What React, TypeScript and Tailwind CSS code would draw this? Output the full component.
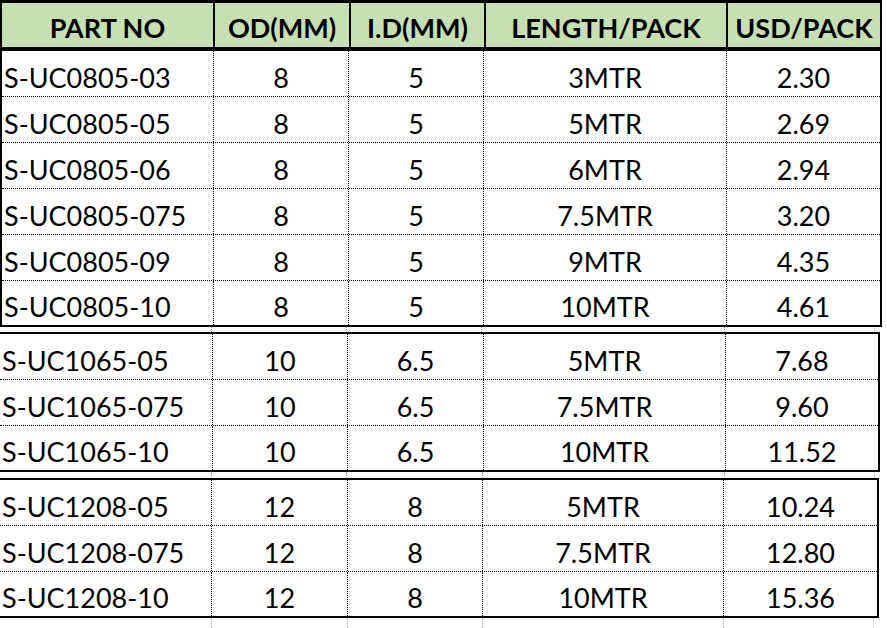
type Row = [string, string, string, string, string];

interface Group {
  cols: string[];
  box: string;
  rows: Row[];
}

const headers = ['PART NO', 'OD(MM)', 'I.D(MM)', 'LENGTH/PACK', 'USD/PACK'];
const headerCols = ['w-[213px]', 'w-[136px]', 'w-[135px]', 'w-[242px]'];

const groups: Group[] = [
  {
    cols: ['w-[212px]', 'w-[135px]', 'w-[135px]', 'w-[243px]'],
    box: 'w-[882px] border-l-2',
    rows: [
      ['S-UC0805-03', '8', '5', '3MTR', '2.30'],
      ['S-UC0805-05', '8', '5', '5MTR', '2.69'],
      ['S-UC0805-06', '8', '5', '6MTR', '2.94'],
      ['S-UC0805-075', '8', '5', '7.5MTR', '3.20'],
      ['S-UC0805-09', '8', '5', '9MTR', '4.35'],
      ['S-UC0805-10', '8', '5', '10MTR', '4.61'],
    ],
  },
  {
    cols: ['w-[213px]', 'w-[135px]', 'w-[136px]', 'w-[242px]'],
    box: 'w-[880px]',
    rows: [
      ['S-UC1065-05', '10', '6.5', '5MTR', '7.68'],
      ['S-UC1065-075', '10', '6.5', '7.5MTR', '9.60'],
      ['S-UC1065-10', '10', '6.5', '10MTR', '11.52'],
    ],
  },
  {
    cols: ['w-[212px]', 'w-[136px]', 'w-[135px]', 'w-[241px]'],
    box: 'w-[879px]',
    rows: [
      ['S-UC1208-05', '12', '8', '5MTR', '10.24'],
      ['S-UC1208-075', '12', '8', '7.5MTR', '12.80'],
      ['S-UC1208-10', '12', '8', '10MTR', '15.36'],
    ],
  },
];

function HeaderRow() {
  return (
    <div className="flex h-[49px] w-[882px] border-t-[3px] border-b-2 border-x-2 border-black bg-[#c6e0b4] font-bold">
      {headers.map((h, i) => (
        <div
          key={h}
          className={`flex items-center justify-center pt-[5px] ${
            i < 4 ? `${headerCols[i]} shrink-0 border-r-2 border-black` : 'flex-1'
          }`}
        >
          {h}
        </div>
      ))}
    </div>
  );
}

// the sheet's gridlines that show between the bordered blocks
function Gap({ cols, height }: { cols: string[]; height: string }) {
  return (
    <div className={`flex w-[886px] ${height}`}>
      {cols.map((c, i) => (
        <div key={i} className={`${c} shrink-0 border-r border-dotted border-[#9a9a9a]`} />
      ))}
      <div className="w-[150px] shrink-0 border-r border-[#dcdcdc]" />
    </div>
  );
}

function TableGroup({ group }: { group: Group }) {
  return (
    <div className={`${group.box} border-y-2 border-r-2 border-black`}>
      {group.rows.map((row, ri) => {
        const last = ri === group.rows.length - 1;
        return (
          <div
            key={row[0]}
            className={`flex ${last ? 'h-[44px]' : 'h-[46px] border-b border-dotted border-black'}`}
          >
            {row.map((cell, ci) => (
              <div
                key={ci}
                className={`flex items-center pt-[7px] ${
                  ci === 0 ? 'justify-start pl-[2px]' : 'justify-center'
                } ${ci < 4 ? `${group.cols[ci]} shrink-0 border-r border-dotted border-black` : 'flex-1'}`}
              >
                {cell}
              </div>
            ))}
          </div>
        );
      })}
    </div>
  );
}

export default function App() {
  return (
    <div className="h-[628px] w-[887px] overflow-hidden bg-white font-['Lato','Liberation_Sans',sans-serif] text-[27px] leading-none text-black">
      <HeaderRow />
      <TableGroup group={groups[0]} />
      <Gap cols={['w-[212px]', 'w-[135px]', 'w-[135px]', 'w-[243px]']} height="h-[5px]" />
      <TableGroup group={groups[1]} />
      <Gap cols={['w-[212px]', 'w-[135px]', 'w-[136px]', 'w-[242px]']} height="h-[6px]" />
      <TableGroup group={groups[2]} />
      <Gap cols={['w-[212px]', 'w-[136px]', 'w-[135px]', 'w-[241px]']} height="h-[14px]" />
    </div>
  );
}
